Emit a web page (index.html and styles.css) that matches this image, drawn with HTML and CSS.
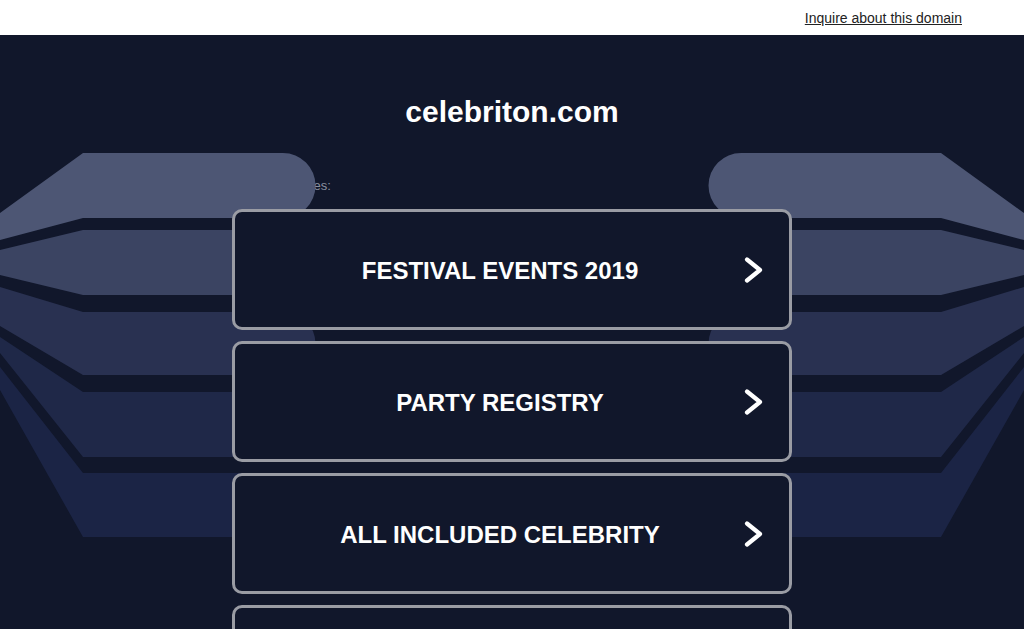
FILE: index.html
```html
<!DOCTYPE html>
<html lang="en">
<head>
<meta charset="utf-8">
<title>celebriton.com</title>
<link rel="stylesheet" href="styles.css">
</head>
<body>
<header class="topbar">
  <a class="inquire" href="#">Inquire about this domain</a>
</header>
<main class="stage">
  <svg class="art" viewBox="0 35 1024 594" width="1024" height="594" aria-hidden="true">
    <g id="wing">
      <path fill="#4d5674" d="M0,213 L83,153 L283,153 A32.5,32.5 0 0 1 283,218 L83,218 L0,240 Z"/>
      <path fill="#3b4462" d="M0,250 L83,230 L283,230 A32.5,32.5 0 0 1 283,295 L83,295 L0,275 Z"/>
      <path fill="#293151" d="M0,287 L83,312 L284,312 A31.5,31.5 0 0 1 284,375 L83,375 L0,326 Z"/>
      <path fill="#1f2848" d="M0,337 L83,392 L284,392 A32.5,32.5 0 0 1 284,457 L83,457 L0,353 Z"/>
      <path fill="#1b2445" d="M0,367 L83,473 L284,473 A32,32 0 0 1 284,537 L83,537 L0,390 Z"/>
    </g>
    <use href="#wing" transform="translate(1024,0) scale(-1,1)"/>
  </svg>
  <h1 class="domain">celebriton.com</h1>
  <div class="column">
    <p class="related">Related Searches:</p>
    <ul class="links">
      <li><a class="btn" href="#"><span class="label">FESTIVAL EVENTS 2019</span><svg class="chev" viewBox="0 0 20 26" width="20" height="26"><path d="M4,2.5 L17,13 L4,23.5"/></svg></a></li>
      <li><a class="btn" href="#"><span class="label">PARTY REGISTRY</span><svg class="chev" viewBox="0 0 20 26" width="20" height="26"><path d="M4,2.5 L17,13 L4,23.5"/></svg></a></li>
      <li><a class="btn" href="#"><span class="label">ALL INCLUDED CELEBRITY</span><svg class="chev" viewBox="0 0 20 26" width="20" height="26"><path d="M4,2.5 L17,13 L4,23.5"/></svg></a></li>
      <li><a class="btn" href="#"><span class="label">CELEBRITY NEWS</span><svg class="chev" viewBox="0 0 20 26" width="20" height="26"><path d="M4,2.5 L17,13 L4,23.5"/></svg></a></li>
    </ul>
  </div>
</main>
</body>
</html>
```

FILE: styles.css
```css
html, body {
  margin: 0;
  padding: 0;
  background: #11172b;
  font-family: "Liberation Sans", Arial, sans-serif;
  overflow: hidden;
}

.topbar {
  height: 35px;
  background: #ffffff;
  display: flex;
  justify-content: flex-end;
  align-items: center;
  padding-right: 62px;
}

.inquire {
  font-size: 14px;
  color: #222222;
  text-decoration: underline;
  margin-top: 1px;
}

.stage {
  position: relative;
  height: 594px;
  background: #11172b;
  overflow: hidden;
}

.art {
  position: absolute;
  left: 0;
  top: 0;
  z-index: 1;
  display: block;
}

.domain {
  position: relative;
  z-index: 2;
  margin: 0;
  padding-top: 59px;
  text-align: center;
  font-size: 30px;
  line-height: 36px;
  font-weight: bold;
  color: #ffffff;
}

.column {
  width: 560px;
  margin: 0 auto;
  position: relative;
}

.related {
  margin: 48px 0 0 -8px;
  font-size: 13px;
  line-height: 16px;
  color: #8a90a0;
  position: relative;
  z-index: 0;
}

.links {
  list-style: none;
  margin: 15px 0 0 0;
  padding: 0;
  display: flex;
  flex-direction: column;
  gap: 11px;
  position: relative;
  z-index: 2;
}

.btn {
  box-sizing: border-box;
  height: 121px;
  display: flex;
  align-items: center;
  padding: 0 26px 0 22px;
  background: #11172b;
  border: 3px solid #9a9ca4;
  border-radius: 10px;
  text-decoration: none;
  color: #ffffff;
}

.label {
  flex: 1;
  text-align: center;
  font-size: 24px;
  font-weight: bold;
  line-height: 28px;
  padding-top: 2px;
  color: #ffffff;
}

.chev {
  display: block;
  flex: none;
}

.chev path {
  fill: none;
  stroke: #ffffff;
  stroke-width: 4.2;
  stroke-linecap: round;
  stroke-linejoin: round;
}
```
